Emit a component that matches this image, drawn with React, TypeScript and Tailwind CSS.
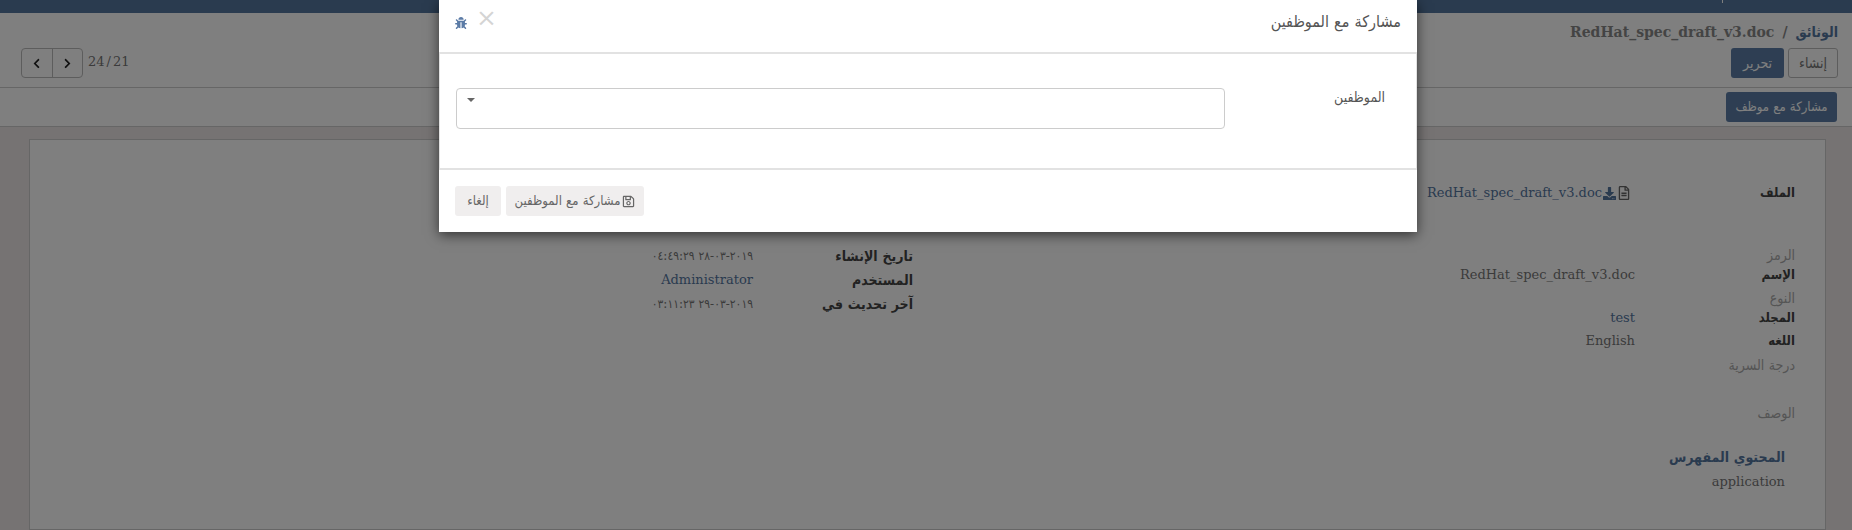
import { FaBug, FaChevronLeft, FaChevronRight, FaDownload, FaRegFileAlt, FaRegSave } from 'react-icons/fa'

const pageFont = "font-['DejaVu_Serif','DejaVu_Sans_Condensed',serif]"

const fields = [
  { label: 'الرمز', muted: true, rowClass: 'h-[19px]' },
  { label: 'الإسم', value: 'RedHat_spec_draft_v3.doc', rowClass: 'h-[24px]' },
  { label: 'النوع', muted: true, rowClass: 'h-[19px]' },
  { label: 'المجلد', value: 'test', link: true, rowClass: 'h-[23px]' },
  { label: 'اللغه', value: 'English', rowClass: 'h-[25px]' },
  { label: 'درجة السرية', muted: true, rowClass: 'h-[48px]' },
  { label: 'الوصف', muted: true, rowClass: 'h-[41px]' },
]

const audit = [
  { label: 'تاريخ الإنشاء', value: '٢٠١٩-٠٣-٢٨ ٠٤:٤٩:٢٩', rowClass: 'h-[24px]' },
  { label: 'المستخدم', value: 'Administrator', link: true, rowClass: 'h-[24px]' },
  { label: 'آخر تحديث في', value: '٢٠١٩-٠٣-٢٩ ٠٣:١١:٢٣', rowClass: 'h-[23px]' },
]

function Modal() {
  return (
    <div className="absolute left-[439px] top-0 z-20 w-[978px] h-[232px] bg-white shadow-[0_3px_12px_rgba(0,0,0,0.6)]">
      <div className="flex items-start justify-between h-[52px] pr-4 pl-[16px]">
        <h4 className="mt-[11px] text-[16px] leading-[22px] text-[#555]">مشاركة مع الموظفين</h4>
        <div className="flex items-start">
          <span className="mt-[5px] ml-[9px] text-[25px] leading-[25px] text-[#d4d4d4]">×</span>
          <FaBug className="mt-[17px] text-[12px] text-[#5b7ba6]" />
        </div>
      </div>
      <div className="flex h-[118px] border-y-[2px] border-x border-[#e2e2e2] pt-[34px] pr-[31px]">
        <label className="w-[160px] text-[14px] leading-[18px] text-[#555]">الموظفين</label>
        <div className="w-[769px] h-[41px] rounded-[4px] border border-[#ccc]">
          <div className="flex justify-end pl-[10px] pt-[9px]">
            <span className="border-x-[4px] border-t-[4px] border-x-transparent border-t-[#666]" />
          </div>
        </div>
      </div>
      <div className="flex justify-end gap-[5px] pl-[16px] pt-[16px]">
        <button className="flex items-center gap-[2px] h-[30px] w-[138px] justify-center rounded-[3px] bg-[#f0eeee] text-[13px] text-[#666]">
          <FaRegSave className="text-[13px]" />
          مشاركة مع الموظفين
        </button>
        <button className="h-[30px] w-[46px] rounded-[3px] bg-[#f0eeee] text-[13px] text-[#666]">إلغاء</button>
      </div>
    </div>
  )
}

export default function App() {
  return (
    <div dir="rtl" className={`relative h-[530px] overflow-hidden bg-white text-[13px] text-[#777] ${pageFont}`}>
      {/* top nav, mostly cut off */}
      <div className="flex h-[13px] items-start bg-[#54769f] pr-[129px]">
        <span className="h-[3px] w-px bg-white" />
      </div>

      {/* control panel */}
      <div className="border-b border-[#ccc] pt-[9px] pb-[10px] pr-[14px] pl-[21px] h-[75px]">
        <div className="h-[26px] text-[14px] font-bold leading-5 text-[#888]">
          <span className="text-[#54769f]">الوثائق</span>
          <span className="mx-2">/</span>
          RedHat_spec_draft_v3.doc
        </div>
        <div className="flex items-start justify-between">
          <div className="flex gap-1">
            <button className="h-[30px] w-[50px] rounded-[3px] border border-[#bbb] text-[14px] text-[#777]">إنشاء</button>
            <button className="h-[30px] w-[53px] rounded-[3px] bg-[#5c7da6] text-[14px] text-white">تحرير</button>
          </div>
          <div className="flex items-start gap-[5px]">
            <span dir="ltr" className="leading-[28px]">
              24<span className="mx-[2px]">/</span>21
            </span>
            <div className="flex h-[30px] w-[62px] rounded-[4px] border border-[#bbb]">
              <span className="flex flex-1 items-center justify-center border-l border-[#bbb] text-[#222]">
                <FaChevronRight className="text-[11px]" />
              </span>
              <span className="flex flex-1 items-center justify-center text-[#222]">
                <FaChevronLeft className="text-[11px]" />
              </span>
            </div>
          </div>
        </div>
      </div>

      {/* status bar */}
      <div className="h-[39px] border-b border-[#ccc] pt-[4px] pr-[15px]">
        <button className="h-[30px] w-[111px] rounded-[3px] bg-[#5c7da6] text-[13px] text-white">مشاركة مع موظف</button>
      </div>

      {/* sheet */}
      <div className="h-[403px] bg-[#ece6e6] pt-[12px] pr-[26px] pl-[29px]">
        <div className="h-[391px] border border-[#ccc] bg-white pt-[43px] pr-[30px]">
          <div className="flex h-[63px] leading-5">
            <span className="w-[160px] font-bold text-[#444]">الملف</span>
            <a className="flex items-center h-5 gap-px pr-[4px] text-[#54769f]">
              <FaRegFileAlt className="text-[14px] text-[#666]" />
              <FaDownload className="text-[13px]" />
              RedHat_spec_draft_v3.doc
            </a>
          </div>

          <div className="flex">
            <div className="w-[882px]">
              {fields.map((f) => (
                <div key={f.label} className={`flex leading-5 ${f.rowClass}`}>
                  <span className={`w-[160px] ${f.muted ? 'text-[14px] leading-[18px] text-[#aaa]' : 'font-bold text-[#444]'}`}>{f.label}</span>
                  {f.value && <span className={f.link ? 'text-[#54769f]' : ''}>{f.value}</span>}
                </div>
              ))}
            </div>
            <div>
              {audit.map((f) => (
                <div key={f.label} className={`flex leading-5 ${f.rowClass}`}>
                  <span className="w-[160px] font-bold text-[14px] text-[#444]">{f.label}</span>
                  <span className={f.link ? 'text-[#54769f]' : 'text-[12px]'}>{f.value}</span>
                </div>
              ))}
            </div>
          </div>

          <div className="pr-[10px]">
            <h3 className="text-[14px] font-bold leading-[25px] text-[#54769f]">المحتوي المفهرس</h3>
            <p className="pt-[2px] leading-5">application</p>
          </div>
        </div>
      </div>

      {/* backdrop */}
      <div className="absolute inset-0 z-10 bg-black/50" />
      <Modal />
    </div>
  )
}
